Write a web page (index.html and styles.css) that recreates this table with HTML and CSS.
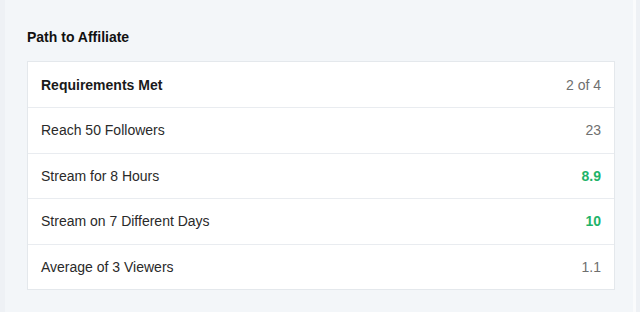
FILE: index.html
```html
<!DOCTYPE html>
<html>
<head>
<meta charset="utf-8">
<link rel="stylesheet" href="styles.css">
</head>
<body>
<div class="frame">
  <section class="panel">
    <h2 class="title">Path to Affiliate</h2>
    <div class="card">
      <div class="row head"><span class="label">Requirements Met</span><span class="value">2 of 4</span></div>
      <div class="row"><span class="label">Reach 50 Followers</span><span class="value">23</span></div>
      <div class="row"><span class="label">Stream for 8 Hours</span><span class="value good">8.9</span></div>
      <div class="row"><span class="label">Stream on 7 Different Days</span><span class="value good">10</span></div>
      <div class="row"><span class="label">Average of 3 Viewers</span><span class="value">1.1</span></div>
    </div>
  </section>
</div>
</body>
</html>
```
FILE: styles.css
```css
html, body {
  margin: 0;
  padding: 0;
  background: #eef1f5;
  font-family: "Liberation Sans", Arial, sans-serif;
}
.frame {
  padding: 0 4px 0 5px;
  height: 312px;
  box-sizing: border-box;
}
.panel {
  background: #f3f6f9;
  border-right: 3px solid #fafbfc;
  height: 100%;
  box-sizing: border-box;
  padding: 28px 18px 0 22px;
}
.title {
  margin: 0;
  font-size: 14px;
  font-weight: bold;
  color: #111;
  line-height: 18px;
  height: 33px;
}
.card {
  background: #fff;
  border: 1px solid #e4e8ec;
}
.row {
  display: flex;
  justify-content: space-between;
  align-items: center;
  height: 44.5px;
  padding: 0 13px 0 13px;
  border-top: 1px solid #e9ecf0;
  font-size: 14px;
  color: #2a2a2a;
}
.row.head {
  height: 45px;
  border-top: none;
}
.row.head .label {
  font-weight: bold;
  color: #1a1a1a;
}
.value {
  color: #6f6f6f;
}
.value.good {
  color: #1fb36a;
  font-weight: bold;
}
```
